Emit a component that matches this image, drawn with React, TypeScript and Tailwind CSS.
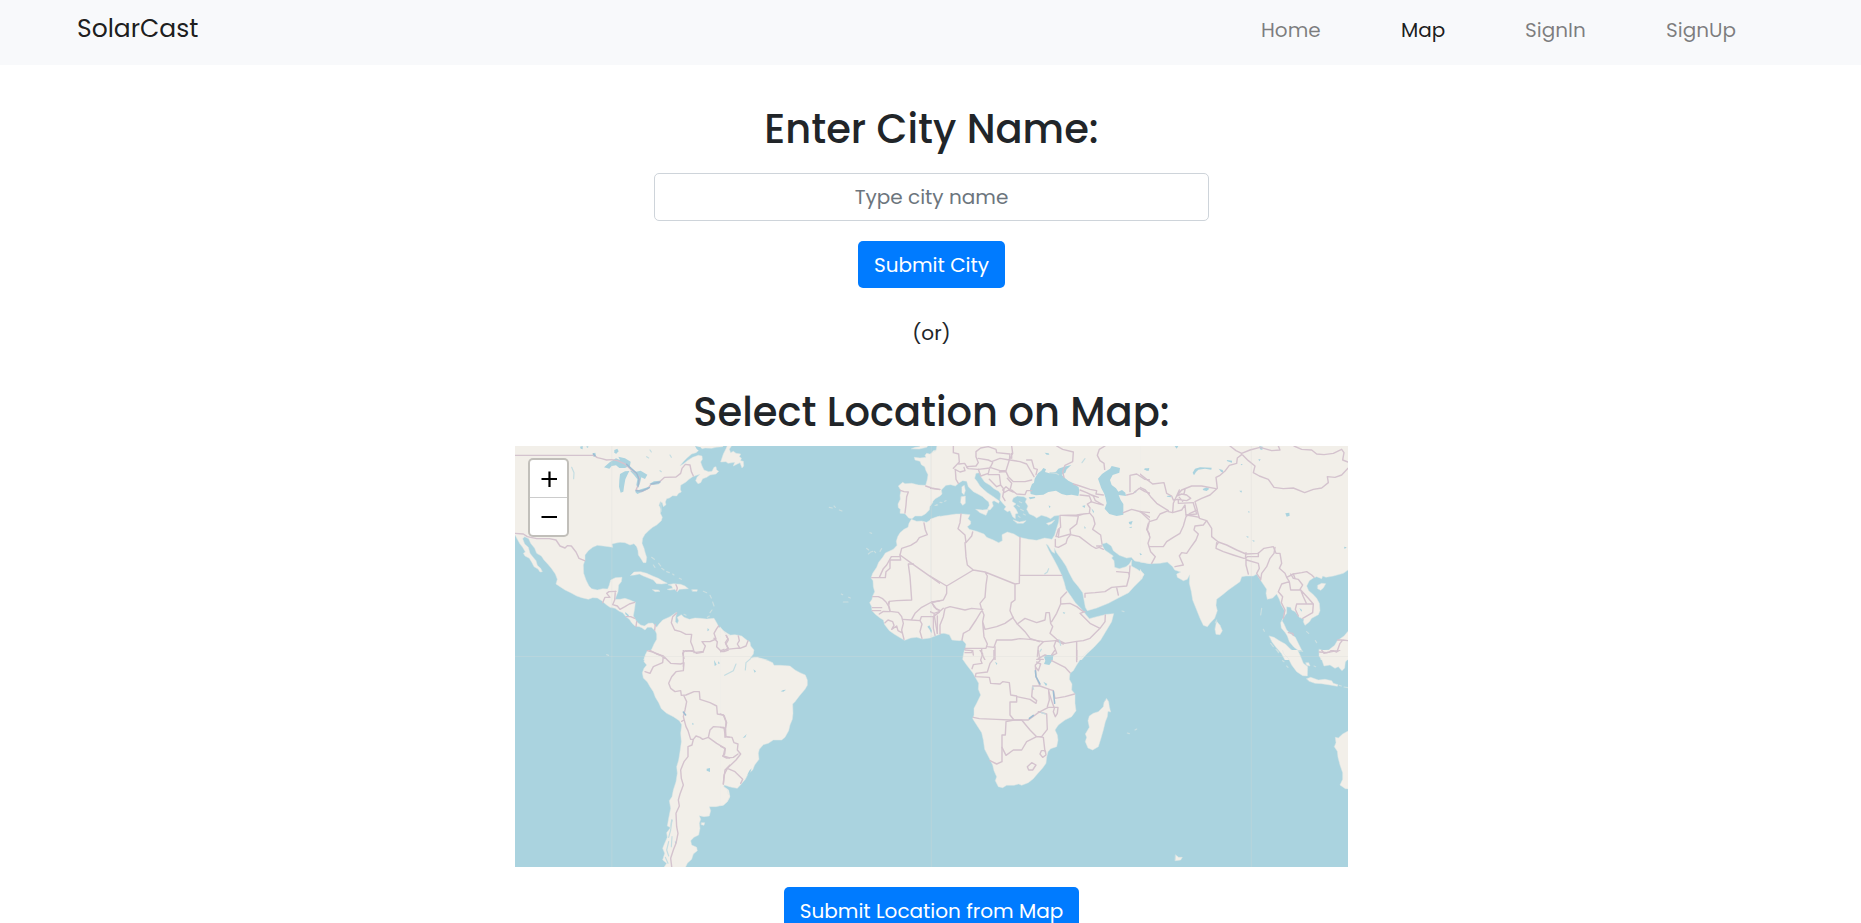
import React from "react";

type Sector = {
  x: number;
  y: number;
  land: string[];
  water?: string[];
  islets?: string[];
  borders: string[];
  rivers?: string[];
  fjords?: string[];
};

// Each sector is a 660-unit square, three units per map pixel.
const sectors: Sector[] = [
  {
    x: -15,
    y: -18,
    land: [
      // North and Central America
      "M0,0H650L638,20 618,22 605,25 585,24 570,28 558,38 545,42 530,55 520,65 510,77 520,72 532,62 548,52 565,46 576,48 577,58 572,66 576,78 582,90 596,95 606,94 612,82 618,80 620,90 626,94 618,102 600,105 590,112 578,116 572,128 564,131 557,122 561,112 570,103 560,106 548,110 537,118 528,126 512,136 511,148 514,156 506,160 500,168 488,167 478,174 470,176 466,186 468,194 460,200 457,188 450,187 447,196 453,208 451,220 457,232 454,242 440,255 428,262 418,270 405,283 398,295 396,310 402,325 406,340 410,352 408,368 400,368 393,356 385,345 384,332 380,320 372,311 360,315 345,308 330,307 318,309 306,312 308,322 296,320 280,318 262,316 248,322 235,332 225,345 225,360 220,375 221,400 228,420 237,438 245,446 262,450 278,446 293,447 298,435 302,420 316,413 336,412 334,425 326,435 324,455 315,478 330,478 345,475 360,480 376,487 374,505 370,528 380,545 392,555 403,558 415,550 428,549 440,562 447,552 458,540 480,530 500,517 497,532 496,545 502,551 506,542 502,532 514,524 522,532 538,538 555,534 570,535 590,537 612,535 620,548 626,560 640,572 660,585V670H398L404,650 412,638 425,628 432,612 440,598 440,582 436,572 424,562 412,562 405,570 395,563 388,560 375,558 366,550 358,538 348,530 338,518 328,514 315,505 300,502 290,495 275,482 262,474 248,473 235,478 215,473 200,468 182,458 165,450 150,440 138,432 142,418 136,402 124,385 115,374 102,360 94,348 80,340 74,325 62,310 56,296 44,290 38,296 44,312 55,322 60,340 68,350 78,362 82,376 92,385 97,395 90,396 84,387 72,380 66,368 58,355 45,348 40,340 46,336 38,322 30,312 22,298 15,284 0,272Z",
      "M362,406L372,396 392,395 410,400 428,408 445,415 460,424 472,430 455,432 440,431 430,420 415,414 400,408 388,402 375,405Z",
      "M475,434L490,431 512,433 525,438 535,446 520,447 508,448 502,455 494,448 480,450 472,448 488,445 485,438Z",
      "M428,449L445,450 450,454 436,455Z",
      "M546,449L562,449 561,454 548,454Z",
    ],
    water: [
      // Great Lakes and small northern lakes
      "M282,82L300,66 318,55 330,60 325,50 345,55 362,65 360,77 345,84 328,84 318,76 305,78 298,86Z",
      "M330,102L345,94 358,93 352,105 346,118 342,140 340,155 332,158 327,140 328,120Z",
      "M360,92L378,95 392,92 412,104 405,117 394,112 390,130 384,145 379,135 382,118 372,105Z",
      "M375,155L392,148 408,143 420,138 414,148 396,156 382,162Z",
      "M418,132L432,124 450,122 448,132 430,135Z",
      "M313,30L322,26 326,34 318,42 313,37Z",
      "M210,20L218,18 218,28 212,26Z",
      "M228,20L235,18 234,24Z",
      "M248,40L256,38 258,48 250,50Z",
      "M555,18L572,22 580,32 600,38 606,44 590,44 574,38 560,27Z",
      "M593,564L598,570 592,574Z",
      "M346,516L357,526 354,530 346,522Z",
    ],
    islets: [
      "M425,352L433,358",
      "M430,375L435,382",
      "M446,370L452,378",
      "M455,385L462,390",
      "M470,395L478,398",
      "M488,402L492,405",
      "M508,415L514,418",
      "M580,454L590,458",
      "M600,466L604,474",
      "M608,486L612,498",
      "M606,510L600,518",
      "M592,532L598,528",
      "M522,523L528,526",
    ],
    borders: [
      "M15,46H252L262,53 275,56 290,60 305,59 322,62 345,72 362,88 378,100 388,112 386,132 378,150 395,155 415,145 422,134 448,126 464,112 498,111 512,100 516,85 526,73 540,75 544,95 550,108",
      "M15,280L40,282 52,290 80,296 118,296 138,300 150,318 165,324 172,317 184,318 198,336 207,355 224,362",
      "M278,488L285,472 300,472 290,460 297,455 318,454M316,454L314,480 308,494 322,498 330,508 345,500 358,492 374,487M348,530L362,530 374,535",
      "M380,545L378,560M436,553L434,570",
      "M500,519L488,530 484,548 494,570 512,575 528,583 545,583 542,605 548,620 552,635 525,632 518,640 522,655",
      "M552,638L580,634 586,618 576,605 600,605 618,597 612,580 620,566 626,558M612,595L622,605 620,620 632,632 642,628M650,588L655,600 648,612 655,625",
      "M412,632L428,636 450,645 465,655",
      "M498,434L502,444 500,452",
    ],
    rivers: ["M378,152L395,153 418,143", "M350,73L364,86 380,100 387,118 384,138", "M424,132L450,126", "M250,42L255,47"],
    fjords: ["M452,186L454,214", "M185,82L192,98 191,116", "M410,50L416,54", "M480,45L484,52", "M420,30L424,36M450,92L454,95"],
  },
  {
    x: 615,
    y: -18,
    land: [
      // Newfoundland, then western Europe, Africa and Brazil's north coast
      "M24,12L18,26 10,42 2,66 18,65 24,70 44,67 40,78 52,72 60,68 66,84 71,78 70,64 62,62 64,54 58,50 62,42 48,40 40,34 32,38 28,28 38,12Z",
      "M575,26L585,22 598,20 605,12H628L620,22 598,27Z",
      "M660,12L652,30 640,32 632,43 620,40 615,46 618,52 600,54 583,52 585,60 600,64 604,74 614,80 618,92 624,104 622,118 617,136 596,135 575,130 555,131 548,127 535,138 543,152 540,166 541,178 534,192 535,203 541,208 540,220 555,221 566,234 576,236 585,228 605,228 616,222 628,210 630,198 638,188 636,178 648,168 660,162Z",
      "M660,228L635,237 620,247 605,243 590,244 574,238 567,250 564,262 552,268 540,278 533,290 529,304 531,316 520,328 496,339 488,352 476,367 470,382 458,400 453,414 459,422 460,440 464,455 458,468 456,478 449,488 455,500 456,512 466,523 480,534 490,540 494,554 508,572 522,582 538,592 554,601 572,594 590,592 608,597 630,594 645,588 660,583Z",
      "M0,560L8,570 16,580 24,586 45,584 65,588 80,600 90,606 92,618 102,630 98,642 88,650 85,656 105,652 128,656 148,662H0Z",
    ],
    water: ["M622,560L628,556 636,572 634,580 628,568Z"],
    islets: ["M328,202L337,204", "M342,198L346,202", "M358,210L366,213", "M450,278L455,280", "M440,325L446,330M452,336L458,334M463,334L467,338M480,334L485,326M445,342L450,338", "M364,462L368,464M386,472L391,474M370,486L384,486", "M645,196L650,196"],
    borders: [
      "M617,138L635,144 660,149",
      "M541,151L552,155 565,156 560,170 558,195 555,219",
      "M612,249L616,270 622,284 598,293 590,305 572,316 545,325 540,345 542,360H510V385L498,395 496,413H455",
      "M540,345L575,370 610,395 660,430M540,350H514L500,375 490,386 478,412",
      "M565,372H580M565,373L570,410 575,480 530,482 508,484 505,490",
      "M458,470L475,470 488,476 498,486 508,502 510,515 490,514 478,522M457,503H485M457,512H482",
      "M508,484L506,498 510,514 535,517 545,530 550,550 545,570 552,598M495,548L504,540 518,545 522,556 515,568 530,558 534,572 545,578",
      "M548,538L575,540 600,542 606,552 600,575 606,595M575,538L585,520 605,502 635,486 660,482M600,542L604,530H640L640,565 645,586M640,530L660,515M652,528V580",
      "M635,486L642,500 650,508 660,512",
      "M18,586L24,596 16,608 24,625 12,632 0,635M55,588L58,602 52,612 60,625 78,618 84,602M20,628L40,626 60,624",
    ],
  },
  {
    x: 1245,
    y: -18,
    land: [
      // Europe, the Middle East and North Africa around the Mediterranean
      "M22,10L18,32 0,42V198L8,185 16,176 30,168 36,162 34,150 48,136 62,134 76,138 88,128 98,122 110,124 115,140 130,155 145,163 158,170 166,178 176,186 178,196 172,208 180,210 190,198 186,186 192,182 206,190 208,183 190,170 172,158 160,148 150,138 142,125 134,115 138,100 150,98 154,112 164,126 180,136 192,146 206,154 212,162 210,180 220,192 228,200 222,208 232,215 240,212 248,230 256,236 256,222 264,220 258,208 250,198 258,192 246,184 250,174 262,168 282,170 290,176 286,186 294,198 290,208 298,222 312,228 320,234 334,226 350,230 362,236 372,228 388,226 386,246 380,265 374,285 366,298 344,294 320,301 296,298 268,292 252,282 232,276 216,284 217,302 206,308 190,300 170,292 162,282 140,274 118,268 112,260 122,252 122,244 114,236 120,224 100,222 78,222 52,226 22,230 0,238V590L20,582 42,580 58,584 66,600 88,602 97,600 108,612 105,635 100,665H450L470,642 492,622 512,600 530,570 545,545 551,521 530,523 500,530 478,536 468,524 455,508 436,488 424,470 408,448 402,425 395,405 382,378 368,352 357,332 348,312 354,316 366,335 374,340 373,324 380,338 396,360 408,378 418,400 430,422 445,440 458,458 462,480 466,502 472,512 500,504 535,490 565,474 596,458 612,440 636,416 642,402 622,388 604,378 605,360 598,372 588,380 568,386 554,382 552,362 545,354 550,348 536,338 524,330 515,312 530,308 544,318 550,332 568,346 590,354 604,352 614,363 660,371V10Z",
      "M96,140L103,136 106,152 102,164 96,158Z",
      "M94,170L106,168 106,190 98,196 92,188Z",
      "M138,208L158,210 176,208 168,226 150,218Z",
      "M250,240L268,246 288,242 280,250 262,250Z",
      "M350,250L362,246 374,240 366,250 356,255Z",
    ],
    water: [
      "M314,116L324,100 334,92 340,84 348,88 345,96 358,100 378,95 385,86 402,80 424,75 410,88 406,98 395,104 402,112 415,122 430,130 446,142 448,154 445,168 425,164 410,166 395,162 378,152 355,156 340,164 318,166 302,162 300,148 306,132 312,128Z",
      "M504,116L516,102 528,94 540,86 545,78 570,84 568,98 548,105 540,120 545,135 558,145 565,155 576,150 586,158 588,168 566,165 572,180 580,192 580,224 560,228 538,222 524,206 530,190 526,172 522,160 514,145Z",
      "M596,246L608,243 604,254 598,252Z",
      "M596,262L606,260 604,264Z",
      "M612,155L620,150 618,158Z",
      "M344,38L356,40 358,44 350,44Z",
      "M345,648L366,646 368,660H348Z",
      "M645,84L658,90 650,92Z",
      "M356,196L362,200 358,204Z",
      "M456,198L466,196 464,204Z",
      "M484,205L492,214 490,220Z",
      "M462,258L468,264 464,266Z",
      "M296,172L314,170 316,174 300,178Z",
      "M398,516L406,518 402,522Z",
      "M628,340L634,342 632,346Z",
    ],
    islets: ["M30,187L36,188M44,184L48,182M20,194L23,195", "M268,185L275,188M262,196L268,200M272,208L280,212M280,222L286,225M265,228L270,232", "M576,513L582,515M360,98L378,100 386,104"],
    borders: [
      "M70,18V38L86,42 88,66 70,85M86,72L104,70 110,80 138,78 145,68 138,50 138,35 152,24 175,20 198,28 200,38 240,42 238,60 210,55 185,65 175,60 145,55M75,88L90,96 105,92 102,82M110,82L115,86 145,88 180,84 188,68M76,90L78,118 85,130",
      "M245,18L248,40 238,60 228,92 210,92 180,82M145,88L152,108 175,100 178,88M175,104L208,104 212,135 200,140 178,118M208,96L228,95 235,110 250,125 285,125 305,120M240,60L270,65 290,72 305,98 312,110M290,60L305,60 312,85 322,88 318,104M245,40V55M212,135L222,148 218,170 225,182M232,115L245,130 240,150 228,140 218,150M245,150L260,162 285,164 290,152 305,152M222,158L236,150 250,156",
      "M380,18L398,28 430,36 428,65 405,76 398,95 402,112",
      "M525,18L508,28 502,46 510,62 522,70 524,88M600,155V106L620,102 645,118 660,120M590,165L610,160 628,145 645,155 660,160M450,165L478,168 485,185 472,192 480,204 478,220 460,222 440,225 390,226M430,132L450,138 480,148 500,152 498,162 520,165M450,150L470,158 490,168 496,182 520,195 500,190 482,185M485,165L505,172M580,218L605,208 635,216 660,232M478,218L490,232 495,252 488,268 512,285 516,312M390,228L392,262 385,268 378,290 385,290 388,268M394,226L445,228 440,252 420,268 422,282 385,292M422,284L412,296 408,310 385,322 376,320 376,298M440,228L460,222M422,284L448,290 485,318 498,325 508,322 520,328M500,318H516",
      "M0,145L30,148M93,222L90,248 84,266 105,285 108,308 125,288 128,276M105,308L108,350 112,375 130,390 165,396 255,432 268,430 270,292M270,406H395M130,390L50,438 0,408M50,438L50,460 40,480 5,488M165,396L172,408 168,435 165,472 150,490 155,508 125,505 105,510 60,500 45,505 40,530 30,555 30,582M255,432L255,480 244,488 240,512 250,535 262,552",
      "M155,508L162,525 158,545 165,568 200,560 225,550 250,532M158,508L150,520 138,540 118,570 100,580 96,600M158,548L162,590 172,612 168,625H105M155,625L155,640 165,660M172,620L192,622 200,600 245,600 270,596 300,598 340,605 378,602",
      "M262,552L285,535 320,548 345,540 348,518 358,518 362,550 368,560 360,580 380,598 405,610 440,604 460,602 480,595 510,565 525,545 526,525M262,552L285,575 300,595 328,605M510,565L480,550 462,532 450,520 465,515M365,545L380,520 392,492 392,475 410,456M392,492L420,490 440,500 460,515M440,604V660M378,602L372,618 380,640 360,650 345,645 325,655M340,605L325,620 322,650M378,602L400,612",
      "M465,472V460L495,458 525,455 545,442 590,438 598,408 596,398 560,395M560,443L565,465M598,405L600,378M0,515L12,520 15,540 22,580M12,520L28,515 40,505M5,488L18,505 30,512",
      "M195,620V660M105,630L128,632 130,645M655,250L650,268 660,285M630,215L660,218",
    ],
    fjords: ["M356,386L352,396 344,402", "M388,600L392,616", "M465,56L456,68", "M334,628L330,634"],
  },
  {
    x: 1875,
    y: -18,
    land: [
      // South and East Asia
      "M0,0H660V382L624,390 610,400 580,408 558,412 548,408 545,416 530,410 520,414 508,422 500,438 506,452 518,462 530,475 538,490 540,512 535,524 515,535 508,546 495,556 490,545 492,538 478,532 466,515 455,510 452,502 440,500 440,520 432,530 426,542 432,552 440,570 452,582 466,592 474,608 486,632 478,634 462,622 448,605 442,588 436,578 424,564 422,548 432,530 434,512 424,495 418,478 410,462 398,474 382,478 378,460 380,448 368,430 360,418 350,402 340,408 318,408 305,410 300,425 285,436 265,450 248,464 230,478 228,496 232,512 224,535 210,550 202,560 190,556 180,535 168,505 158,480 154,455 148,430 149,404 142,418 130,422 112,412 110,402 122,396 104,390 98,380 82,366 60,370 30,371 0,366Z",
      "M0,388L12,404 0,420Z",
      "M230,544L240,556 247,572 240,584 228,583 225,568Z",
      "M533,436L545,430 557,431 550,444 542,451 533,446Z",
      "M388,588L402,592 418,602 436,612 452,628 468,640 482,662H436L424,640 408,622 396,606Z",
      "M538,628L550,632 566,630 584,616 592,602 612,588 624,574 660,560V670H545Z",
    ],
    water: ["M158,98L165,86 180,82 215,83 214,89 195,86 175,89 168,96 162,106Z", "M188,147L200,142 208,146 200,153 190,151Z", "M436,220L448,218 449,227 440,230Z", "M236,86L248,90 250,100 242,94Z", "M260,60L276,62 276,68 262,64Z", "M358,18L368,20 367,30 360,28Z", "M104,18H115L110,26Z", "M12,86L28,84 26,92 14,90Z", "M80,168L94,166 92,172 82,170Z", "M478,504L486,510 484,515Z", "M318,288L326,290 324,294Z", "M298,152L306,152 304,158Z", "M336,300L344,302 342,306Z", "M324,213L330,216 326,218Z", "M612,320L620,322 614,327Z", "M0,340L6,343 2,346Z", "M355,58H362L358,64Z", "M302,72H308L305,76Z"],
    islets: ["M365,505L362,525M370,568L373,574M392,610L400,620M408,628L415,636M500,575L506,580M526,602L530,608", "M230,540L226,548"],
    borders: [
      "M270,18L288,32 305,40 330,30 360,22 395,32 420,30 415,18M305,44L292,54 290,70 268,76 256,92 240,106 228,112 232,145 210,165 185,175 165,185 172,210 150,220 138,230 130,258 120,280 100,292 80,305 70,320H28",
      "M308,45L325,62 345,78 340,98 358,108 385,118 402,142 430,146 460,144 494,158 520,148 545,144 565,128 562,110 585,112 605,105 624,85M462,18L485,28 515,30 530,42 552,44 580,40 605,28 612,38 608,60 624,66",
      "M0,102L38,132 72,128 80,160 95,168 100,180 115,178 115,190 160,188M0,142L16,150 32,170 50,190 85,212 60,222 50,238 28,245 22,270 30,292 24,310 32,335 46,350 35,370M0,214L28,240",
      "M228,146L185,138 155,138 125,150 110,168 125,162 140,165 152,175 140,182 112,178M135,148L132,162M118,150L100,190 98,218 85,215M98,218L125,210 135,195 138,225 170,222 160,190M118,172L128,184M172,212L178,235 200,242 215,265 215,290 235,306 260,315 290,330 318,342 355,340 372,325 400,320 408,340 420,340 425,370 418,385 435,400 440,412 460,402 485,398 500,395 515,405 522,412",
      "M138,225L158,228 178,232M200,242L190,255 165,258 162,270 175,282 168,300 150,325 140,340 125,338 118,348 130,375 105,380",
      "M230,308L228,325 250,335 280,345 312,355M235,308L230,315M318,338L316,355 322,350 355,350 355,338M318,355V375L325,402M320,360L355,370 358,385 350,400 362,418M405,322L402,340 390,355 380,380 365,400 362,420",
      "M440,412L448,425 425,432 415,455 428,470 424,488 435,510 430,535M448,425L452,450 482,450 490,470 500,492 470,492 466,508 475,528M452,402L460,415 475,418 488,435 480,448 505,475 520,492 518,518 488,535M500,492H520M460,402L465,415M445,578L458,580 460,586",
      "M538,636L560,638 592,632 600,610 608,600 624,602M593,600L605,600",
    ],
  },
  {
    x: -15,
    y: 612,
    land: [
      "M418,-10L406,14 402,35 410,45 402,55 397,68 400,84 412,96 420,110 430,125 436,142 446,158 454,176 470,190 490,200 508,212 515,224 512,250 514,275 510,305 506,330 500,350 502,370 498,395 490,420 486,440 478,452 482,475 478,495 476,505 472,528 480,532 484,508 488,510 480,535 470,548 472,562 464,580 458,595 464,610 458,630 470,640 460,655H525L532,640 545,628 550,612 562,602 560,592 545,585 542,572 552,562 566,555 570,535 568,520 572,508 568,497 582,500 598,498 602,482 598,470 618,470 640,465 652,455 660,440 656,420 642,410 640,400 660,410V-10Z",
      "M574,518H584L582,526 574,524Z",
    ],
    water: ["M590,356L600,354 600,366 590,362Z", "M546,218L552,222 548,225Z", "M494,575L500,574 498,582Z", "M612,30L620,44 614,48ZM624,34L630,40 625,42Z"],
    islets: ["M290,14L296,16"],
    borders: [
      "M418,0L440,12 460,18 482,40 512,42 522,38 520,62 498,65 485,80 476,100 482,115 495,125 512,122 514,136 528,135 552,125 568,125 570,148 600,158 620,168 622,192 640,195 648,215 645,262M460,18L458,38 430,50 420,70 405,65M520,0V50",
      "M522,138L530,155 525,180 520,200 528,230 534,242 542,268 550,268 558,258 570,262 578,268 595,262 600,240 610,230 642,232 646,260 660,262M522,210L515,214M595,262L620,280 645,295 640,318 660,324M550,268L546,285 534,290 534,320 522,335 512,360 514,385 520,405 510,432 505,450 508,468 498,490 500,530 504,550 498,580 490,600 482,625 485,650M640,402L645,360 660,345",
      "M528,4L545,0 560,10 580,6",
    ],
    rivers: ["M520,186L527,195"],
    fjords: ["M486,510L482,540 476,562", "M476,575L470,600 476,618", "M466,622L474,640", "M486,560L484,590"],
  },
  {
    x: 615,
    y: 612,
    land: [
      "M0,-10H100L100,12 90,25 112,22 130,28 145,32 158,38 162,46 180,46 210,48 225,60 240,68 256,75 262,90 262,106 255,118 238,138 225,155 218,162 219,190 217,208 210,225 206,242 195,262 185,270 160,270 145,280 130,284 118,298 115,310 117,328 104,345 98,360 84,372 76,388 62,404 52,415 35,412 12,405 10,410 24,420 22,428 30,438 22,454 10,466 0,467Z",
    ],
    water: ["M95,355L90,370 82,374 88,362Z", "M100,58L108,64 104,68Z", "M182,124L190,120 198,119 190,125Z", "M68,264L80,252 76,262Z"],
    borders: [
      "M0,192L12,196 20,218 16,235 18,260 36,262 42,278 54,282 52,300 62,312 48,330 22,355 12,375 10,402M0,288L16,296 14,312 8,318 20,324 40,322 54,312M0,232L16,235M22,355L45,365 68,388 62,400",
      "M0,5H12L25,0",
    ],
    fjords: ["M92,26L78,38 76,60", "M48,42L40,62 14,76"],
  },
  {
    x: 1245,
    y: 612,
    land: [
      "M105,-10L100,15 98,28 110,45 128,68 136,82 146,100 145,118 152,135 140,160 132,175 132,195 128,206 140,225 155,248 160,270 164,298 178,325 188,345 192,362 200,380 196,392 205,410 218,413 230,406 252,406 266,402 275,406 295,398 310,386 322,372 338,354 348,340 350,322 354,305 362,296 380,290 384,270 382,255 375,240 385,225 405,210 425,200 438,182 435,160 435,132 425,120 426,102 418,88 420,70 430,62 440,45 455,22 482,-4Z",
      "M530,146L536,155 538,170 542,186 534,184 532,200 526,215 520,240 512,268 505,290 488,300 474,294 466,275 470,262 466,252 478,232 474,212 478,198 490,190 505,185 520,170 522,158Z",
    ],
    water: ["M342,20L352,15 370,16 368,30 358,45 342,42 346,32Z", "M340,95L352,102 348,108Z", "M195,35L202,40 200,45Z"],
    islets: ["M592,249L598,251M615,240L620,237"],
    borders: [
      "M105,8H125L128,0M150,0L158,12 152,30 156,40 130,44 126,56M192,0V25L180,40 172,66 138,70 136,80 178,82 182,100 210,102 218,95 238,98 242,135 260,138V156H240V195L252,210 228,215 226,255H216V335L200,342 180,332",
      "M130,202L148,206 200,208 240,210 295,210 325,188 355,172 372,172 366,155 356,125M260,140L300,148 318,160 320,152 305,140 308,108 330,108 318,80 316,45 330,32 325,0M316,50L325,62 332,42 320,36M330,108L358,118 370,122 375,145 405,140 434,132M374,172L384,172 382,190 376,200 370,185 374,172M440,0V35M365,32L405,52 420,68M320,28H340M375,0L365,15",
      "M216,292L228,316 250,300 275,300 290,275 320,260 340,262 345,305M252,210L275,210 300,240 320,260M320,260H335L352,238 350,192 325,185M334,302H346L348,315 338,322 330,312ZM292,350L305,338 318,345 308,360 296,360Z",
      "M356,118L358,150 352,170",
    ],
    rivers: ["M316,62L318,80 330,102", "M370,124L374,160", "M298,205L310,196"],
    fjords: ["M308,110L311,118", "M334,188L346,192"],
  },
  {
    x: 1875,
    y: 612,
    land: [
      "M425,-10H468L480,15 490,40 503,50 502,78 488,77 470,65 455,45 445,25 432,12Z",
      "M538,-10L537,18 545,28 552,48 570,45 585,55 595,50 606,62 614,54 616,36 624,28 660,20V-10Z",
      "M500,86L512,82 535,90 555,88 575,92 580,100 594,104 592,109 570,105 545,101 525,100 508,94Z",
      "M660,238L624,243 608,252 595,264 586,262 588,278 583,290 592,304 594,322 600,345 608,368 608,388 600,405 616,416 660,420Z",
      "M107,615L116,622 127,622 122,630 106,632Z",
      "M498,38L506,38 510,48 500,46Z",
    ],
    islets: ["M598,106L604,108M612,111L624,113M522,48L527,50M412,2L416,8M428,32L432,35M440,48L444,52M476,0L488,4"],
    borders: ["M545,0L552,10 568,6 575,0 590,6 600,0"],
  },
];

function Strokes({ paths }: { paths?: string[] }) {
  return (
    <>
      {(paths ?? []).map((d, i) => (
        <path key={i} d={d} />
      ))}
    </>
  );
}

function WorldMap() {
  return (
    <svg className="block h-[421px] w-[833px]" viewBox="0 0 2499 1263" preserveAspectRatio="none">
      <rect width="2499" height="1263" fill="#aad3df" />
      {sectors.map((s) => (
        <svg key={`${s.x}:${s.y}`} x={s.x} y={s.y} width="660" height="660" strokeLinejoin="round" strokeLinecap="round">
          <g fill="#f2efe9" stroke="#dfe7e4" strokeWidth="1.5">
            <Strokes paths={s.land} />
          </g>
        </svg>
      ))}
      {sectors.map((s) => (
        <svg key={`${s.x}:${s.y}`} x={s.x} y={s.y} width="660" height="660" fill="none" strokeLinejoin="round" strokeLinecap="round">
          <g fill="#aad3df">
            <Strokes paths={s.water} />
          </g>
          <g stroke="#cbdfe1" strokeWidth="3.5">
            <Strokes paths={s.islets} />
          </g>
          <g stroke="#d4c3ce" strokeWidth="4.2">
            <Strokes paths={s.borders} />
          </g>
          <g stroke="#9dbdd3" strokeWidth="4.5">
            <Strokes paths={s.rivers} />
          </g>
          <g stroke="#c4dde2" strokeWidth="3.5">
            <Strokes paths={s.fjords} />
          </g>
        </svg>
      ))}
      <g stroke="#dcdcd8" strokeOpacity="0.28" strokeWidth="3">
        <path d="M290.5 0V1263M1249 0V1263M2209 0V1263M0 631.500H2499" />
      </g>
    </svg>
  );
}

export default function App() {
  return (
    <div className="h-[923px] overflow-hidden bg-white font-[Poppins,Inter,sans-serif] text-[20px] text-[#212529]">
      <header className="flex h-[65px] items-start justify-between bg-[#f8f9fb] pl-[77px] pr-[125px]">
        <a className="pt-[10px] text-[25px] leading-[38px] text-black/90">SolarCast</a>
        <nav className="flex gap-20 pt-[15px] leading-[30px] text-black/50">
          <a className="w-[60px] whitespace-nowrap">Home</a>
          <a className="w-[44px] whitespace-nowrap text-black/90">Map</a>
          <a className="w-[61px] whitespace-nowrap">SignIn</a>
          <a className="w-[70px] whitespace-nowrap">SignUp</a>
        </nav>
      </header>

      <main className="ml-[515px] flex w-[833px] flex-col items-center">
        <h2 className="mt-10 text-[40px] font-medium leading-[48px]">Enter City Name:</h2>
        <input
          className="mt-5 h-12 w-[555px] rounded-[5px] border border-[#ced4da] bg-white text-center text-[#495057] placeholder:text-[#6c757d]"
          placeholder="Type city name"
        />
        <button className="mt-5 h-[47px] w-[147px] whitespace-nowrap rounded-[5px] bg-[#007bff] text-white">Submit City</button>
        <p className="mt-[30px] leading-[30px]">(or)</p>
        <h2 className="mt-[40px] text-[40px] font-medium leading-[48px]">Select Location on Map:</h2>
        <div className="relative mt-[10px] h-[421px] w-[833px]">
          <WorldMap />
          <div className="absolute left-[13px] top-3 flex w-[41px] flex-col overflow-hidden rounded-[5px] border-2 border-black/20 bg-white bg-clip-padding">
            <button className="flex h-[38px] items-center justify-center border-b border-[#ccc]" aria-label="Zoom in">
              <svg className="h-4 w-4" viewBox="0 0 16 16" stroke="#000" strokeWidth="2.2">
                <path d="M0.500 8H16M8.500 0.500V16" />
              </svg>
            </button>
            <button className="flex h-[37px] items-center justify-center" aria-label="Zoom out">
              <svg className="h-4 w-4" viewBox="0 0 16 16" stroke="#000" strokeWidth="2.2">
                <path d="M0.500 8H16" />
              </svg>
            </button>
          </div>
        </div>
        <button className="mt-5 h-[47px] w-[295px] shrink-0 whitespace-nowrap rounded-[5px] bg-[#007bff] pt-px text-white">Submit Location from Map</button>
      </main>
    </div>
  );
}
